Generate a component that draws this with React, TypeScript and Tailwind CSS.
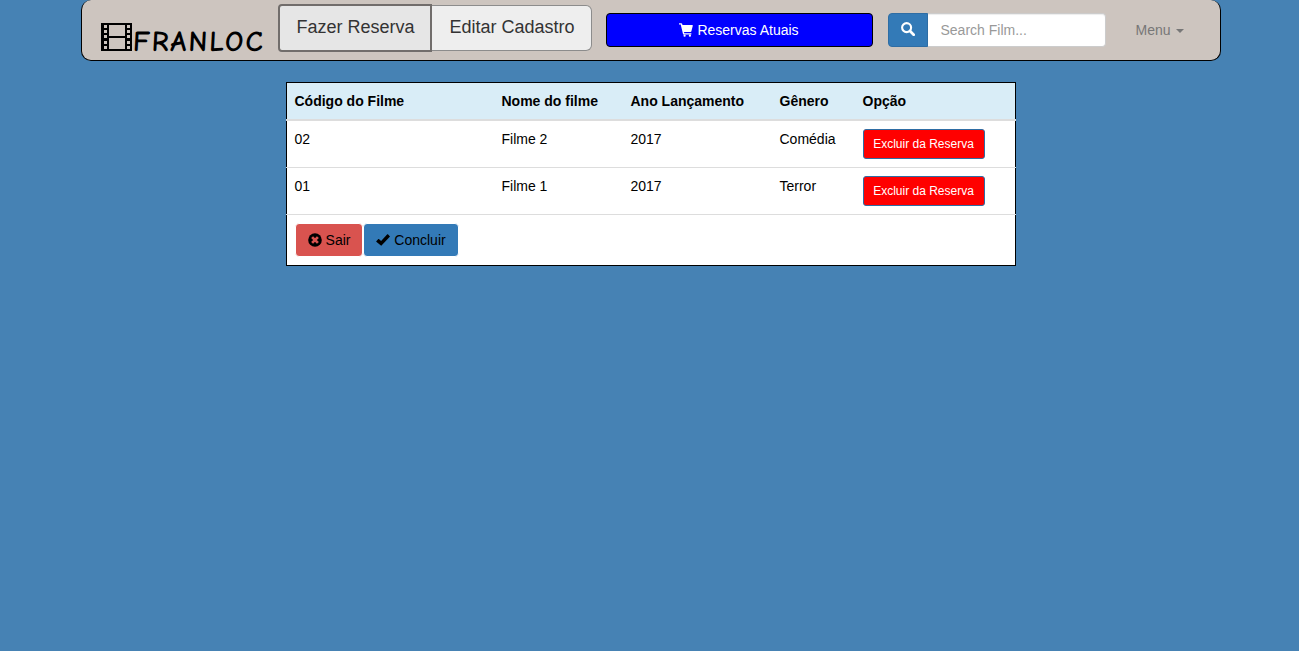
import React from "react";

const Film = () => (
  <svg className="block h-[28px] w-[31px] shrink-0" viewBox="0 0 31 28" shapeRendering="crispEdges">
    <path
      fillRule="evenodd"
      fill="#000"
      d="M0 0H31V28H0ZM8 2V13H24V2ZM8 15V26H24V15ZM3 2V5H6V2ZM3 7V10H6V7ZM3 12V15H6V12ZM3 18V21H6V18ZM3 23V26H6V23ZM26 2V5H29V2ZM26 7V10H29V7ZM26 12V15H29V12ZM26 18V21H29V18ZM26 23V26H29V23Z"
    />
  </svg>
);

const Cart = () => (
  <svg className="h-[14px] w-[14px]" viewBox="0 0 14 14" fill="currentColor">
    <path d="M0.3 0.2H2.3Q2.9 0.2 3.1 0.8L3.5 2H13.2Q14 2 13.8 2.8L12.4 8.2Q12.2 9 11.4 9H5L5.3 10.2H12Q12.5 10.2 12.5 10.8T12 11.4H4.7Q4.2 11.4 4 10.9L1.7 1.5H0.3Q-.1 1.5 0 .8T.3.2Z" />
    <circle cx="5.6" cy="12.7" r="1.1" />
    <circle cx="10.9" cy="12.7" r="1.1" />
  </svg>
);

const Search = () => (
  <svg className="h-[14px] w-[14px]" viewBox="0 0 14 14" fill="none" stroke="currentColor">
    <circle cx="5.6" cy="5.6" r="4.5" strokeWidth="2.1" />
    <path d="M9 9L12.7 12.7" strokeWidth="2.7" strokeLinecap="round" />
  </svg>
);

const Remove = () => (
  <svg className="h-[14px] w-[14px]" viewBox="0 0 14 14">
    <circle cx="7" cy="7" r="6.8" fill="#000" />
    <path d="M4.1 4.1L9.9 9.9M9.9 4.1L4.1 9.9" stroke="#d9534f" strokeWidth="2.7" />
  </svg>
);

const Check = () => (
  <svg className="h-[14px] w-[14px]" viewBox="0 0 14 14" fill="#000">
    <path d="M0.3 8.2L2.3 6.1Q2.6 5.8 2.9 6.1L5.1 8L11.3 1.3Q11.6 1 11.9 1.3L13.8 3.2Q14.1 3.5 13.8 3.8L5.5 12.6Q5.2 12.9 4.9 12.6L0.3 8.7Q0 8.5 .3 8.2Z" />
  </svg>
);

const films = [
  { code: "02", name: "Filme 2", year: "2017", genre: "Comédia" },
  { code: "01", name: "Filme 1", year: "2017", genre: "Terror" },
];

export default function App() {
  return (
    <div className="min-h-screen bg-[#4682b4] font-['Liberation_Sans',Arial,sans-serif] text-[14px] leading-[20px] text-black">
      <nav className="ml-[81px] flex h-[61px] w-[1140px] items-start rounded-[10px] border border-t-0 border-black bg-[#cdc5bf]">
        <a className="ml-[19px] mt-[23px] flex w-[177px] items-start">
          <Film />
          <span className="mt-[4px] ml-px -skew-x-3 font-['Comic_Sans_MS','Comic_Neue',cursive] text-[29px] leading-[30px] font-bold tracking-[1.9px]">
            FRANLOC
          </span>
        </a>
        <div className="mt-[4px] flex items-start text-[18px] leading-[24px] text-[#333]">
          <button className="h-[48px] w-[154px] rounded-l-[4px] border-2 border-[#716d6b] bg-[#e6e6e6] pb-[2px] pl-px">
            Fazer Reserva
          </button>
          <button className="mt-[1px] h-[46px] w-[160px] rounded-r-[6px] border border-l-0 border-[#8c8c8c] bg-[#eee] pb-[2px] pl-px">
            Editar Cadastro
          </button>
        </div>
        <button className="mt-[13px] ml-[14px] flex h-[34px] w-[267px] items-center justify-center gap-[4px] rounded-[4px] border border-black bg-[#0000ff] pr-px text-white">
          <Cart />
          Reservas Atuais
        </button>
        <div className="mt-[13px] ml-[15px] flex h-[34px] w-[218px]">
          <button className="flex w-[40px] items-center justify-center rounded-l-[4px] border border-[#2e6da4] bg-[#337ab7] pr-px pb-[2px] text-white">
            <Search />
          </button>
          <input
            className="w-[178px] rounded-r-[4px] border border-l-0 border-[#ccc] bg-white pr-3 pl-[12.5px] shadow-[inset_0_1px_1px_rgba(0,0,0,0.075)] outline-none placeholder:text-[#999]"
            placeholder="Search Film..."
          />
        </div>
        <a className="mt-[20px] ml-[29.5px] flex items-center gap-[5px] text-[#777]">
          Menu
          <span className="mt-[1px] border-x-4 border-t-4 border-x-transparent border-t-[#777]" />
        </a>
      </nav>

      <table className="mt-[21px] ml-[286px] w-[730px] table-fixed border-collapse border border-black bg-white text-left">
        <colgroup>
          <col className="w-[207px]" />
          <col className="w-[129px]" />
          <col className="w-[149px]" />
          <col className="w-[83px]" />
          <col className="w-[161px]" />
        </colgroup>
        <thead className="bg-[#d9edf7]">
          <tr className="border-b-2 border-[#ddd]">
            <th className="py-2 pl-[7.5px]">Código do Filme</th>
            <th className="p-2">Nome do filme</th>
            <th className="p-2">Ano Lançamento</th>
            <th className="p-2">Gênero</th>
            <th className="p-2">Opção</th>
          </tr>
        </thead>
        <tbody>
          {films.map((f) => (
            <tr key={f.code} className="align-top">
              <td className="border-b border-[#ddd] py-2 pl-[7.5px]">{f.code}</td>
              <td className="border-b border-[#ddd] p-2">{f.name}</td>
              <td className="border-b border-[#ddd] p-2">{f.year}</td>
              <td className="border-b border-[#ddd] p-2">{f.genre}</td>
              <td className="border-b border-[#ddd] p-2">
                <button className="block h-[30px] w-[122px] rounded-[3px] border border-[#2e6da4] bg-[#ff0000] text-[12px] leading-[18px] text-white">
                  Excluir da Reserva
                </button>
              </td>
            </tr>
          ))}
          <tr>
            <td colSpan={5} className="p-2">
              <div className="flex">
                <button className="flex h-[34px] w-[68px] items-center justify-center gap-[4px] rounded-[4px] border border-white bg-[#d9534f]">
                  <Remove />
                  Sair
                </button>
                <button className="flex h-[34px] w-[96px] items-center justify-center gap-[4px] rounded-[4px] border border-white bg-[#337ab7]">
                  <Check />
                  Concluir
                </button>
              </div>
            </td>
          </tr>
        </tbody>
      </table>
    </div>
  );
}
